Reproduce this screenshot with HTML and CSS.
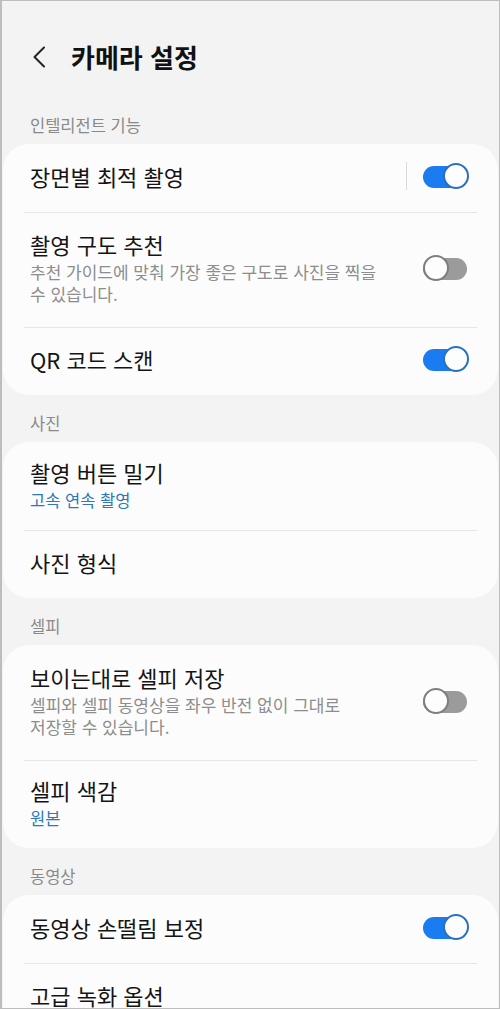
FILE: index.html
```html
<!DOCTYPE html>
<html lang="ko">
<head>
  <meta charset="UTF-8" />
  <meta name="viewport" content="width=device-width, initial-scale=1.0"/>
  <title>카메라 설정</title>
  <link rel="stylesheet" href="styles.css">
</head>
<body>
  <div class="screen">
    <div class="header">
      <svg class="back" width="14" height="22" viewBox="0 0 14 22">
        <path d="M12 1.5 L2.5 11 L12 20.5" fill="none" stroke="#222" stroke-width="2" stroke-linecap="round" stroke-linejoin="round"/>
      </svg>
      <h1>카메라 설정</h1>
    </div>

    <p class="section">인텔리전트 기능</p>
    <div class="card">
      <div class="row">
        <div class="text">
          <div class="title">장면별 최적 촬영</div>
        </div>
        <span class="sep"></span>
        <span class="toggle on"></span>
      </div>
      <div class="row">
        <div class="text">
          <div class="title">촬영 구도 추천</div>
          <div class="desc">추천 가이드에 맞춰 가장 좋은 구도로 사진을 찍을 수 있습니다.</div>
        </div>
        <span class="toggle"></span>
      </div>
      <div class="row">
        <div class="text">
          <div class="title">QR 코드 스캔</div>
        </div>
        <span class="toggle on"></span>
      </div>
    </div>

    <p class="section">사진</p>
    <div class="card">
      <div class="row with-value">
        <div class="text">
          <div class="title">촬영 버튼 밀기</div>
          <div class="value">고속 연속 촬영</div>
        </div>
      </div>
      <div class="row">
        <div class="text">
          <div class="title">사진 형식</div>
        </div>
      </div>
    </div>

    <p class="section">셀피</p>
    <div class="card">
      <div class="row">
        <div class="text">
          <div class="title">보이는대로 셀피 저장</div>
          <div class="desc">셀피와 셀피 동영상을 좌우 반전 없이 그대로 저장할 수 있습니다.</div>
        </div>
        <span class="toggle"></span>
      </div>
      <div class="row with-value">
        <div class="text">
          <div class="title">셀피 색감</div>
          <div class="value">원본</div>
        </div>
      </div>
    </div>

    <p class="section">동영상</p>
    <div class="card">
      <div class="row">
        <div class="text">
          <div class="title">동영상 손떨림 보정</div>
        </div>
        <span class="toggle on"></span>
      </div>
      <div class="row">
        <div class="text">
          <div class="title">고급 녹화 옵션</div>
        </div>
      </div>
    </div>
  </div>
</body>
</html>
```

FILE: styles.css
```css
body {
  margin: 0;
  padding: 0;
  font-family: 'Noto Sans CJK KR', 'Noto Sans', sans-serif;
  background-color: #f3f3f3;
  color: #141414;
}
.screen {
  box-sizing: border-box;
  width: 500px;
  height: 1009px;
  overflow: hidden;
  border: 1px solid #bdbdbd;
  border-left-width: 2px;
  background-color: #f3f3f3;
}
.header {
  display: flex;
  align-items: center;
  height: 96px;
  box-sizing: border-box;
  padding: 16px 0 0 30px;
}
.back {
  display: block;
  margin-right: 25px;
}
h1 {
  margin: 0;
  font-size: 26px;
  font-weight: 700;
  line-height: 34px;
  color: #111;
}
.section {
  margin: 0;
  padding: 18px 0 9px 28px;
  font-size: 16.5px;
  line-height: 20px;
  color: #8a8a8a;
}
.card {
  margin: 0 1px;
  padding: 0 21px;
  background-color: #fcfcfc;
  border-radius: 26px;
}
.row {
  display: flex;
  align-items: center;
  padding: 18px 8px 22px 6px;
  word-break: keep-all;
}
.row + .row {
  border-top: 1px solid #e6e6e6;
  padding-top: 17px;
}
.row.with-value {
  padding-top: 16px;
  padding-bottom: 19px;
}
.row + .row.with-value {
  padding-top: 15px;
}
.text {
  flex: 1;
  min-width: 0;
}
.title {
  font-size: 22px;
  line-height: 28px;
}
.desc {
  margin-top: 3px;
  padding-right: 40px;
  font-size: 17px;
  line-height: 22px;
  color: #8d8d8d;
}
.value {
  margin-top: 3px;
  font-size: 16.5px;
  line-height: 22px;
  color: #2c78ba;
}
.sep {
  width: 1px;
  height: 28px;
  margin-right: 16px;
  background-color: #d8d8d8;
}
.toggle {
  position: relative;
  flex: none;
  width: 46px;
  height: 26px;
}
.toggle::before {
  content: "";
  position: absolute;
  top: 3px;
  left: 0;
  right: 2px;
  height: 22px;
  border-radius: 11px;
  background-color: #9b9b9b;
}
.toggle::after {
  content: "";
  position: absolute;
  top: 0;
  left: 0;
  width: 22px;
  height: 22px;
  border-radius: 50%;
  border: 2px solid #7e7e7e;
  background-color: #fdfdfd;
}
.toggle.on::before {
  right: 8px;
  background-color: #1a7cf0;
}
.toggle.on::after {
  left: auto;
  right: 0;
  border-color: #2b6fc2;
}
```
